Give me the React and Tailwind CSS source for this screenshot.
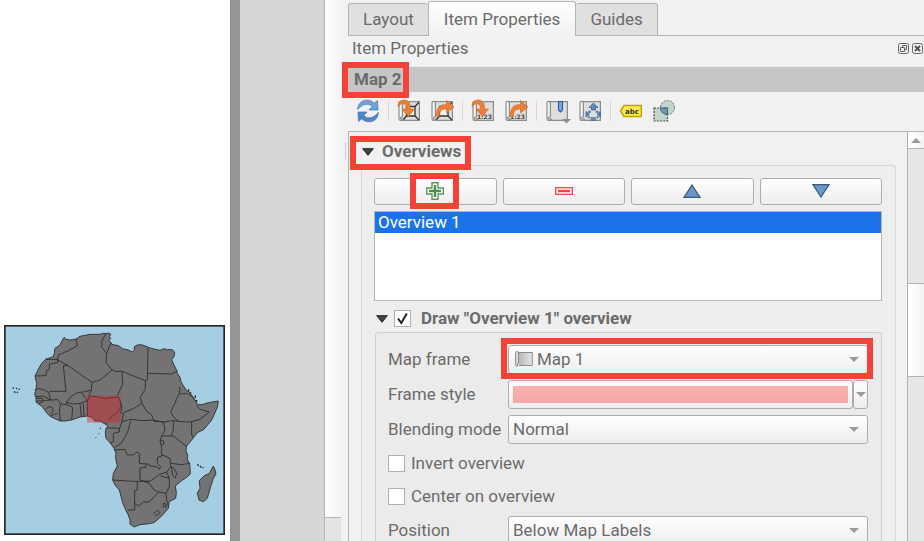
import { useState } from "react";

/* ---------- Map drawing ---------- */

const LAND =
  "193,52 198,58 210,60 228,57 240,49 255,46 270,43 300,43 310,40 318,41 325,39 333,43 328,50 332,55 327,61 333,68 335,73 355,77 368,86 385,90 397,96 403,90 403,80 412,75 425,74 438,79 448,83 462,87 480,91 492,86 502,89 517,89 524,97 522,110 515,119 522,135 531,153 532,160 540,172 543,185 550,197 558,210 568,216 578,230 585,240 592,253 605,254 625,248 655,243 652,262 635,300 612,328 592,338 575,360 560,378 558,392 563,405 562,418 569,430 571,462 560,472 545,482 526,498 529,518 527,535 508,545 505,565 485,588 462,608 440,612 420,614 402,621 390,612 390,600 385,585 377,570 367,545 358,510 345,495 338,480 340,460 352,438 347,415 348,400 342,385 330,368 318,355 316,340 318,325 325,318 300,303 285,303 276,292 262,288 240,291 215,300 195,303 180,303 165,296 150,289 138,276 128,262 116,252 108,246 108,234 104,222 108,210 110,190 105,168 115,148 125,130 137,118 160,110 163,98 165,85 180,75 187,60";

const BORDERS = [
  "228,57 232,78 205,92 175,105 173,120",
  "137,118 173,118 173,128 148,132 148,148 140,152 138,167 105,168",
  "173,120 203,136 276,187 300,180 337,150 318,128 320,100 306,82 305,66 310,54 318,41",
  "190,138 198,214 150,214 146,218",
  "203,136 190,138",
  "320,100 328,80 333,68",
  "104,210 116,206 132,209 146,218 150,232 152,240",
  "276,187 274,210 250,216 232,218 215,228 200,246",
  "108,235 128,235 128,242 108,244",
  "108,230 130,228 152,240 160,240 172,238 182,252 200,254 200,246",
  "116,252 132,242 152,240",
  "138,268 145,260 156,262 160,272 152,282",
  "182,252 178,270 180,288 180,303",
  "172,280 160,284 150,289",
  "200,254 218,262 215,300",
  "200,246 218,252 240,250 262,242 246,220",
  "240,250 244,291",
  "250,250 252,290",
  "262,242 262,288",
  "262,242 270,228 290,230 315,236 340,232 354,232 360,242",
  "274,210 266,228",
  "337,150 345,154 366,154 368,192 352,228",
  "366,154 436,182 442,180 444,84",
  "444,160 515,162 531,153",
  "436,182 436,208 420,232 426,250 400,266 370,278",
  "360,242 364,258 350,280 340,285 325,300",
  "360,242 366,260 362,278 370,282 366,305 392,298 430,302 458,300 490,306",
  "426,250 440,274 455,285 462,304",
  "540,200 538,222 530,236 525,250 512,275 520,290 535,304 560,306 575,305 600,298 628,276 600,268 590,256",
  "538,222 560,220 575,228 588,244",
  "575,305 575,345 580,352",
  "462,304 490,306 520,302 535,304",
  "490,306 495,330 485,348 520,348 558,378",
  "520,304 520,330 514,346",
  "485,348 480,360 485,385 484,402 490,406",
  "480,360 490,362 492,372 483,376",
  "392,302 385,330 376,350 362,372 344,382",
  "320,324 342,324 358,326 366,305",
  "358,326 358,336 340,340 340,366 330,368",
  "342,390 374,388 382,405 402,404 410,396 418,400 418,430 438,432 438,442 420,444 420,480 432,484",
  "438,430 452,438 470,440 478,448 482,440 472,430 472,412 490,406",
  "490,406 510,415 512,440 500,456 478,464 450,484 432,484",
  "338,480 400,484 450,484",
  "412,484 412,510 404,512 404,570 384,570",
  "404,550 415,558 430,546 448,546 468,524 478,516",
  "432,484 450,492 462,510 478,516 498,520 508,500 508,475 482,468",
  "508,475 500,456",
  "498,520 500,540 503,550 505,560",
  "512,440 522,445 530,460 526,474 518,466 514,440",
  "512,430 545,434 569,430",
  "490,550 498,552 498,562 490,560 490,550",
  "462,580 472,570 480,578 470,588 462,580",
];

function OverviewMap() {
  return (
    <svg
      viewBox="12 15 663 630"
      className="block w-[221px] h-[210px]"
      role="img"
      aria-label="Overview map of Africa"
    >
      <rect x="14.5" y="17.5" width="658" height="625" fill="#a6cee3" />
      <g fill="#737373" stroke="#303030" strokeWidth="2.8" strokeLinejoin="round">
        <polygon points={LAND} />
        <polygon points="640,438 645,450 648,462 640,475 632,500 622,535 610,545 597,540 592,520 600,505 598,482 612,468 628,460" />
        {BORDERS.map((points) => (
          <polyline key={points} points={points} fill="none" />
        ))}
        <path
          d="M38 203l4 2M48 204l4 3M58 206v4M42 214l4 4M50 216l4 2M317 310l3-1M300 326l2-2M296 340l1 2M287 352l1 1M592 433l4 4M600 438l4 5M608 441l2 3M566 208v6M570 218l4 2M586 226v8M590 240v6"
          strokeWidth="4"
          fill="none"
        />
      </g>
      <rect x="261" y="227" width="101" height="81" fill="#e31a1c" fillOpacity="0.4" />
      <rect x="14.5" y="17.5" width="658" height="625" fill="none" stroke="#262626" strokeWidth="5" />
    </svg>
  );
}

/* ---------- Icons ---------- */

function Icon({ children }) {
  return (
    <svg viewBox="0 0 24 24" className="block size-6" aria-hidden="true">
      {children}
    </svg>
  );
}

function Scroll() {
  return (
    <g stroke="#8c8c8c" strokeWidth="1.2">
      <path d="M4 2.6H22.4V21.4H5" fill="#dedede" />
      <path d="M2 3.5c0-1.6 3.4-1.6 3.4 0V18H4.2c-1 0-1 2 0 2h1.6c1 0 1.2 1.4-.8 1.4H3.6C2.4 21.4 2 20.6 2 19.5Z" fill="#f4f4f4" />
    </g>
  );
}

function ExtentLines() {
  return (
    <g stroke="#2e3436" strokeWidth="1.3" fill="none">
      <path d="M9.5 7.5H18V17H9.5Z" fill="#f2f2f2" />
      <path d="M18 7.5L22 3.2M18 17L22 21M9.5 17L6.5 20.5" />
    </g>
  );
}

function ScaleText() {
  return (
    <text x="6" y="20" fontSize="6" fontWeight="700" fill="#444" className="font-['DejaVu_Sans',sans-serif]">
      1:23
    </text>
  );
}

function ArrowIn() {
  return (
    <path
      d="M1 8C.8 3 4 .8 7.5 1c4 .3 6 3 6 7.500V10h4L11.3 17.5 5 10h4.3V8.500C9.3 6 8 4.800 6 4.800 4 4.800 2.500 5.800 1 8Z"
      fill="#e8803a"
      stroke="#cf6420"
      strokeWidth=".6"
    />
  );
}

function ArrowOut() {
  return (
    <path
      d="M6.500 17.500C6 9 9.500 5.500 16.500 5.500V1.500L24 8 16.500 14V10C12.500 10 9.500 11 9.300 17.500Z"
      fill="#e8803a"
      stroke="#cf6420"
      strokeWidth=".6"
    />
  );
}

function RefreshIcon() {
  return (
    <Icon>
      <g stroke="#3f74b3" strokeWidth=".7" strokeLinejoin="round">
        <path d="M1.500 10.500C2 4.500 6 1.200 11 1.200c3 0 5.500 1 7.200 3L21.500 1.500 22 11H13l3-3.300C14.800 6 13 5 11 5.200 7.500 5.200 5 7 1.500 10.500Z" fill="#6fa3dc" />
        <path d="M22.500 13.500C22 19.500 18 22.800 13 22.800c-3 0-5.500-1-7.200-3L2.500 22.500 2 13H11l-3 3.300C9.200 18 11 19 13 18.800c3.500 0 6-1.800 9.500-5.300Z" fill="#4f86c6" />
      </g>
    </Icon>
  );
}

function BookmarkIcon() {
  return (
    <svg viewBox="0 0 24 24" className="block size-6 overflow-visible" aria-hidden="true">
      <Scroll />
      <path d="M13.500 2.500H17.500V11L15.500 13 13.500 11Z" fill="#7ba7dc" stroke="#2f5f9c" strokeWidth="1.200" />
      <path d="M17 20H26L21.500 24.500Z" fill="#8c8c8c" />
    </svg>
  );
}

function MoveContentIcon() {
  return (
    <Icon>
      <Scroll />
      <g fill="#5b8ac4" stroke="#2c5482" strokeWidth=".7">
        <path d="M15.500 4L20 8.500H17.500V11H13.500V8.500H11Z" />
        <path d="M8 12.500L11.500 15.200 8 18ZM22.300 12.500L19 15.200 22.300 18Z" />
        <path d="M13 18.500H17.500V21.400H13ZM10.500 12h2v1.500h-2ZM18 12h2v1.500h-2ZM10.200 17.500h1.500v1.500h-1.500ZM18.800 17.500h1.500v1.500h-1.500Z" strokeWidth=".4" />
      </g>
    </Icon>
  );
}

function LabelIcon() {
  return (
    <Icon>
      <path d="M1.500 12L5 6.500H22.300V17.500H5Z" fill="#fce94f" stroke="#c4a000" strokeWidth="1.400" strokeLinejoin="round" />
      <text x="6" y="15" fontSize="7" fontWeight="700" fill="#333" className="font-['DejaVu_Sans',sans-serif]">
        abc
      </text>
    </Icon>
  );
}

function ClippingIcon() {
  return (
    <Icon>
      <circle cx="15.500" cy="8.500" r="7" fill="#c3d5c8" stroke="#5f7470" strokeDasharray="2 1.200" />
      <rect x="2" y="9" width="13.500" height="13" fill="#c3d5c8" stroke="#43514f" strokeDasharray="2 1.200" strokeWidth="1.200" />
      <path d="M8.500 9H15.500V15.500C11.500 15.500 8.500 13 8.500 9Z" fill="#7397ad" stroke="#3e6484" />
    </Icon>
  );
}

const TOOLS = [
  [["Update map preview", <RefreshIcon />]],
  [
    ["Set map extent to match main canvas extent", <Icon><Scroll /><ExtentLines /><ArrowIn /></Icon>],
    ["View current map extent in main canvas", <Icon><Scroll /><ExtentLines /><ArrowOut /></Icon>],
  ],
  [
    ["Set map scale to match main canvas scale", <Icon><Scroll /><ScaleText /><ArrowIn /></Icon>],
    ["Set main canvas to match current map scale", <Icon><Scroll /><ScaleText /><ArrowOut /></Icon>],
  ],
  [
    ["Bookmarks", <BookmarkIcon />],
    ["Interactively edit map extent", <MoveContentIcon />],
  ],
  [
    ["Labeling settings", <LabelIcon />],
    ["Clipping settings", <ClippingIcon />],
  ],
];

/* ---------- Shared controls ---------- */

const FACE = "rounded-[3px] border border-[#adadad] bg-linear-to-b from-white to-[#ededed]";

function Highlight({ className }) {
  return <span className={`pointer-events-none absolute border-6 border-[#f44336] ${className}`} />;
}

function DownArrow({ className = "" }) {
  return (
    <svg viewBox="0 0 10 5" className={`pointer-events-none block w-[10px] h-[5px] ${className}`} aria-hidden="true">
      <path d="M0 0H10L5 5Z" fill="#999" />
    </svg>
  );
}

function Disclosure() {
  return (
    <svg viewBox="0 0 12 8" className="block w-3 h-2" aria-hidden="true">
      <path d="M.7.7H11.300L6 7.300Z" fill="#444" stroke="#222" strokeLinejoin="round" />
    </svg>
  );
}

function Combo({ id, options, icon }) {
  return (
    <div className="relative min-w-0 flex-1">
      <select
        id={id}
        className={`block h-[29px] w-full appearance-none text-[#6b6b6b] ${FACE} ${icon ? "pl-7" : "pl-1"}`}
      >
        {options.map((o) => (
          <option key={o}>{o}</option>
        ))}
      </select>
      {icon}
      <DownArrow className="absolute right-[9px] top-3" />
    </div>
  );
}

function Row({ id, label, children }) {
  return (
    <div className="flex items-center">
      <label htmlFor={id} className="w-[120px] shrink-0 whitespace-nowrap">
        {label}
      </label>
      {children}
    </div>
  );
}

function Tick({ id, label }) {
  return (
    <div className="flex items-center gap-[6px]">
      <input
        id={id}
        type="checkbox"
        className="size-[17px] appearance-none border border-[#b0b0b0] bg-white checked:bg-[#777]"
      />
      <label htmlFor={id}>{label}</label>
    </div>
  );
}

function Tab({ label, active }) {
  return (
    <button
      type="button"
      role="tab"
      aria-selected={Boolean(active)}
      className={
        active
          ? "h-[35px] rounded-t-[3px] border border-b-0 border-[#b4b4b4] bg-linear-to-b from-white to-[#f1f1f1] px-[15px]"
          : "h-[33px] rounded-t-[3px] border border-[#b4b4b4] bg-[#e0e0e0] px-[14px] first:border-r-0 last:border-l-0"
      }
    >
      {label}
    </button>
  );
}

/* ---------- Panel sections ---------- */

function Toolbar() {
  return (
    <div role="toolbar" className="flex h-[39px] items-center gap-[7px] pb-[2px] pl-[14px]">
      {TOOLS.map((group, i) => (
        <div key={i} className="flex items-center gap-[7px]">
          {i > 0 && <span className="h-5 w-px bg-[#d6d6d6]" />}
          {group.map(([name, icon]) => (
            <button key={name} type="button" aria-label={name} className="flex w-[26px] justify-center">
              {icon}
            </button>
          ))}
        </div>
      ))}
    </div>
  );
}

function ListButtons() {
  const cls = `relative flex h-[27px] flex-1 items-center justify-center pb-px ${FACE}`;
  return (
    <div className="flex gap-[6px]">
      <button type="button" aria-label="Add overview" className={cls}>
        <svg viewBox="0 0 18 18" className="size-[18px]" aria-hidden="true">
          <path d="M6 .7H12V6H17.300V12H12V17.300H6V12H.7V6H6Z" fill="#fff" stroke="#5c9560" strokeWidth="1.400" />
          <path d="M9 3V15M3 9H15" stroke="#4d8a52" strokeWidth="2.400" />
        </svg>
        <Highlight className="-top-[6px] left-[35px] h-9 w-[49px]" />
      </button>
      <button type="button" aria-label="Remove overview" className={cls}>
        <svg viewBox="0 0 18 8" className="h-2 w-[18px]" aria-hidden="true">
          <rect x=".7" y=".7" width="16.600" height="6.600" fill="#fff" stroke="#ef5350" strokeWidth="1.400" />
          <path d="M3 4H15" stroke="#ef4444" strokeWidth="2.400" />
        </svg>
      </button>
      <button type="button" aria-label="Move up" className={cls}>
        <svg viewBox="0 0 18 14" className="h-[14px] w-[18px]" aria-hidden="true">
          <path d="M9 1L17 13.300H1Z" fill="#6b97c8" stroke="#3b5878" strokeWidth="1.200" />
        </svg>
      </button>
      <button type="button" aria-label="Move down" className={cls}>
        <svg viewBox="0 0 18 14" className="h-[14px] w-[18px]" aria-hidden="true">
          <path d="M9 13L17 .7H1Z" fill="#6b97c8" stroke="#3b5878" strokeWidth="1.200" />
        </svg>
      </button>
    </div>
  );
}

function OverviewSettings() {
  const [drawn, setDrawn] = useState(true);
  return (
    <section>
      <div className="flex h-[31px] items-center gap-[6px] pt-1 pl-[2px]">
        <Disclosure />
        <span className="relative size-[17px]">
          <input
            id="draw"
            type="checkbox"
            checked={drawn}
            onChange={(e) => setDrawn(e.target.checked)}
            className="block size-[17px] appearance-none border border-[#b0b0b0] bg-white"
          />
          {drawn && (
            <svg viewBox="0 0 17 17" className="pointer-events-none absolute inset-0" aria-hidden="true">
              <path d="M4 8.500L7.300 13 12.800 3.500" fill="none" stroke="#222" strokeWidth="2" />
            </svg>
          )}
        </span>
        <label htmlFor="draw" className="pl-1 font-bold">
          Draw "Overview 1" overview
        </label>
      </div>
      <div className="ml-px flex flex-col gap-[6px] rounded-t-[3px] border border-b-0 border-[#d0d0d0] bg-[#ebebeb] pt-3 pr-[13px] pl-3">
        <div className="relative">
          <Row id="frame" label="Map frame">
            <Combo
              id="frame"
              options={["Map 1"]}
              icon={
                <svg viewBox="0 0 18 16" className="pointer-events-none absolute top-[6px] left-[7px] h-4 w-[18px]" aria-hidden="true">
                  <defs>
                    <linearGradient id="sheet">
                      <stop offset="0" stopColor="#b4b4b4" />
                      <stop offset="1" stopColor="#e6e6e6" />
                    </linearGradient>
                  </defs>
                  <path d="M3 1.500H17.300V14.500H4" fill="url(#sheet)" stroke="#8c8c8c" />
                  <path d="M.6 1.500C.6.3 3.500.3 3.500 1.500V12.500H2.500v2.500H1.600C.9 15 .6 14.500.6 14Z" fill="#ddd" stroke="#8c8c8c" />
                </svg>
              }
            />
          </Row>
          <Highlight className="-top-[7px] -right-[5px] -bottom-[5px] left-[113px]" />
        </div>
        <Row id="style" label="Frame style">
          <button id="style" type="button" className={`h-[29px] min-w-0 flex-1 px-1 ${FACE}`}>
            <span className="block h-[17px] bg-linear-to-b from-[#fbb0b0] to-[#f5a9a9]" />
          </button>
          <button type="button" aria-label="Frame style options" className={`flex h-[29px] w-[15px] items-center justify-center ${FACE}`}>
            <DownArrow />
          </button>
        </Row>
        <Row id="blend" label="Blending mode">
          <Combo id="blend" options={["Normal", "Multiply", "Screen"]} />
        </Row>
        <div className="flex flex-col gap-2 py-px">
          <Tick id="invert" label="Invert overview" />
          <Tick id="center" label="Center on overview" />
        </div>
        <Row id="position" label="Position">
          <Combo id="position" options={["Below Map Labels", "Below Map", "Above Map Labels"]} />
        </Row>
      </div>
    </section>
  );
}

function ScrollBar() {
  return (
    <div className="flex w-[17px] shrink-0 flex-col border-l border-[#b4b4b4] bg-[#e6e6e6]">
      <button type="button" aria-label="Scroll up" className="flex h-[17px] items-center justify-center border-b border-[#b4b4b4] bg-linear-to-r from-white to-[#f3f3f3]">
        <svg viewBox="0 0 10 5" className="h-[5px] w-[10px]" aria-hidden="true">
          <path d="M0 5H10L5 0Z" fill="#999" />
        </svg>
      </button>
      <span className="basis-[134px]" />
      <span className="basis-[94px] border-y border-[#b4b4b4] bg-linear-to-r from-white to-[#f3f3f3]" />
    </div>
  );
}

function PropertiesPanel() {
  return (
    <aside className="flex min-w-0 flex-1 flex-col bg-[#f1f1f1]">
      <div role="tablist" className="ml-[7px] flex h-9 shrink-0 items-end border-b border-[#b4b4b4] *:relative *:top-px">
        <Tab label="Layout" />
        <Tab label="Item Properties" active />
        <Tab label="Guides" />
      </div>
      <div className="flex h-[31px] shrink-0 items-start pt-px pl-[11px]">
        <h1 className="flex-1 leading-[22px]">Item Properties</h1>
        <div className="flex gap-[3px] pt-[6px]">
          <button type="button" aria-label="Float panel">
            <svg viewBox="0 0 11 11" className="block size-[11px]" fill="none" stroke="#666" aria-hidden="true">
              <rect x=".5" y=".5" width="10" height="10" rx="2" />
              <path d="M4.500 4V2.500H8.500V6.500H7M2.500 4.500H6.500V8.500H2.500Z" />
            </svg>
          </button>
          <button type="button" aria-label="Close panel" className="pr-px">
            <svg viewBox="0 0 11 11" className="block size-[11px]" fill="none" stroke="#666" aria-hidden="true">
              <rect x=".5" y=".5" width="10" height="10" rx="2" />
              <path d="M3 3L8 8M8 3L3 8" stroke="#555" strokeWidth="2" />
            </svg>
          </button>
        </div>
      </div>
      <h2 className="relative ml-[7px] h-[25px] shrink-0 bg-[#c6c6c6] pl-[6px] leading-[25px] font-bold">
        Map 2
        <Highlight className="-top-[5px] -left-[6px] h-9 w-[67px]" />
      </h2>
      <Toolbar />
      <div className="flex min-h-0 flex-1">
        <div className="w-[7px] shrink-0 pt-3 pl-1">
          <span className="block h-4 border-l border-dotted border-[#b4b4b4]" />
        </div>
        <div className="flex min-w-0 flex-1 border-t border-l border-[#b4b4b4]">
          <div className="min-w-0 flex-1 pr-[11px] pl-3">
            <h3 className="relative flex h-[33px] items-center gap-2 pt-[6px] pl-px font-bold">
              <Disclosure />
              Overviews
              <Highlight className="top-1 -left-[11px] h-[34px] w-[121px]" />
            </h3>
            <div className="h-full rounded-t-[3px] border border-b-0 border-[#d6d6d6] bg-[#eeeeee] pt-3 pr-[13px] pl-3">
              <ListButtons />
              <ul role="listbox" aria-label="Overviews" className="mt-[6px] h-[90px] border border-[#b4b4b4] bg-white">
                <li role="option" aria-selected="true" className="h-[21px] bg-[#1a73e8] pl-[3px] leading-[21px] text-white">
                  Overview 1
                </li>
              </ul>
              <OverviewSettings />
            </div>
          </div>
          <ScrollBar />
        </div>
      </div>
    </aside>
  );
}

export default function App() {
  return (
    <div className="flex h-screen overflow-hidden bg-[#d6d6d6] font-['Roboto','Liberation_Sans',sans-serif] text-[17px] leading-[25px] text-[#6b6b6b]">
      <main className="flex w-[240px] shrink-0 flex-col justify-end border-r-[10px] border-[#959595] bg-white pb-[6px] pl-1">
        <OverviewMap />
      </main>
      <div className="w-[84px] shrink-0" />
      <div className="flex w-[17px] shrink-0 flex-col border-l border-[#b4b4b4] bg-[#e4e4e4]">
        <span className="flex-1 border-b border-[#b4b4b4] bg-linear-to-r from-white to-[#f3f3f3]" />
        <span className="h-[23px]" />
      </div>
      <PropertiesPanel />
    </div>
  );
}
